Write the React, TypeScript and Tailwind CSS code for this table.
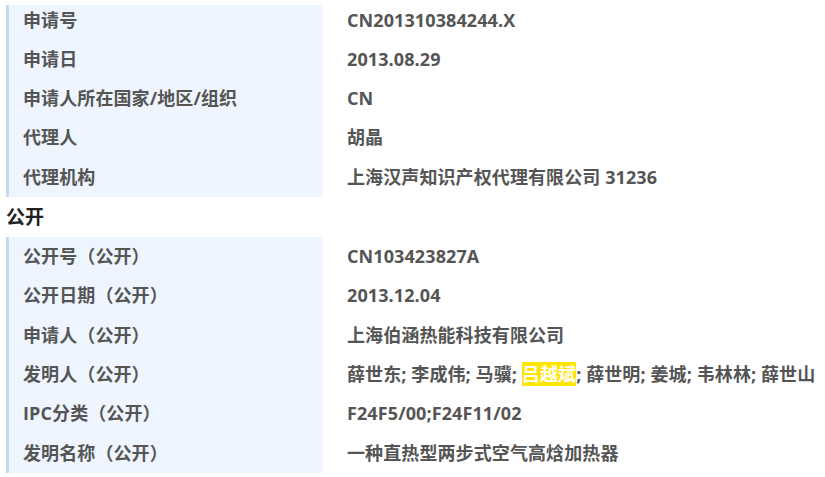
const font = '"Open Sans", "Noto Sans CJK SC", sans-serif';

type Row = { label: string; value: React.ReactNode };

const applicant: Row[] = [
  { label: "申请号", value: "CN201310384244.X" },
  { label: "申请日", value: "2013.08.29" },
  { label: "申请人所在国家/地区/组织", value: "CN" },
  { label: "代理人", value: "胡晶" },
  { label: "代理机构", value: "上海汉声知识产权代理有限公司 31236" },
];

const publication: Row[] = [
  { label: "公开号（公开）", value: "CN103423827A" },
  { label: "公开日期（公开）", value: "2013.12.04" },
  { label: "申请人（公开）", value: "上海伯涵热能科技有限公司" },
  {
    label: "发明人（公开）",
    value: (
      <>
        薛世东; 李成伟; 马骥;{" "}
        <span className="bg-[#ffe500] text-white">吕越斌</span>; 薛世明; 姜城; 韦林林; 薛世山
      </>
    ),
  },
  { label: "IPC分类（公开）", value: "F24F5/00;F24F11/02" },
  { label: "发明名称（公开）", value: "一种直热型两步式空气高焓加热器" },
];

function Block({ rows, first }: { rows: Row[]; first?: boolean }) {
  return (
    <div className="flex">
      <div className="ml-[6px] w-[317px] shrink-0 border-l-[3px] border-[#c6d9f1] bg-[#eef5fe]">
        {rows.map((r, i) => (
          <div
            key={r.label}
            className={`flex items-center pl-[14px] ${first && i === 0 ? "h-[34.5px] pb-[4.5px]" : "h-[39.4px]"}`}
          >
            {r.label}
          </div>
        ))}
      </div>
      <div className="pl-[24px]">
        {rows.map((r, i) => (
          <div
            key={r.label}
            className={`flex items-center whitespace-pre ${first && i === 0 ? "h-[34.5px] pb-[4.5px]" : "h-[39.4px]"}`}
          >
            <span>{r.value}</span>
          </div>
        ))}
      </div>
    </div>
  );
}

export default function App() {
  return (
    <div
      className="w-[825px] h-[477px] overflow-hidden bg-white pt-[5px] text-[18px] font-bold tracking-[0.1px] text-[#555]"
      style={{ fontFamily: font }}
    >
      <Block rows={applicant} first />
      <div className="flex h-[39.5px] items-center pl-[6px] text-[19px] text-[#222]">公开</div>
      <Block rows={publication} />
    </div>
  );
}
